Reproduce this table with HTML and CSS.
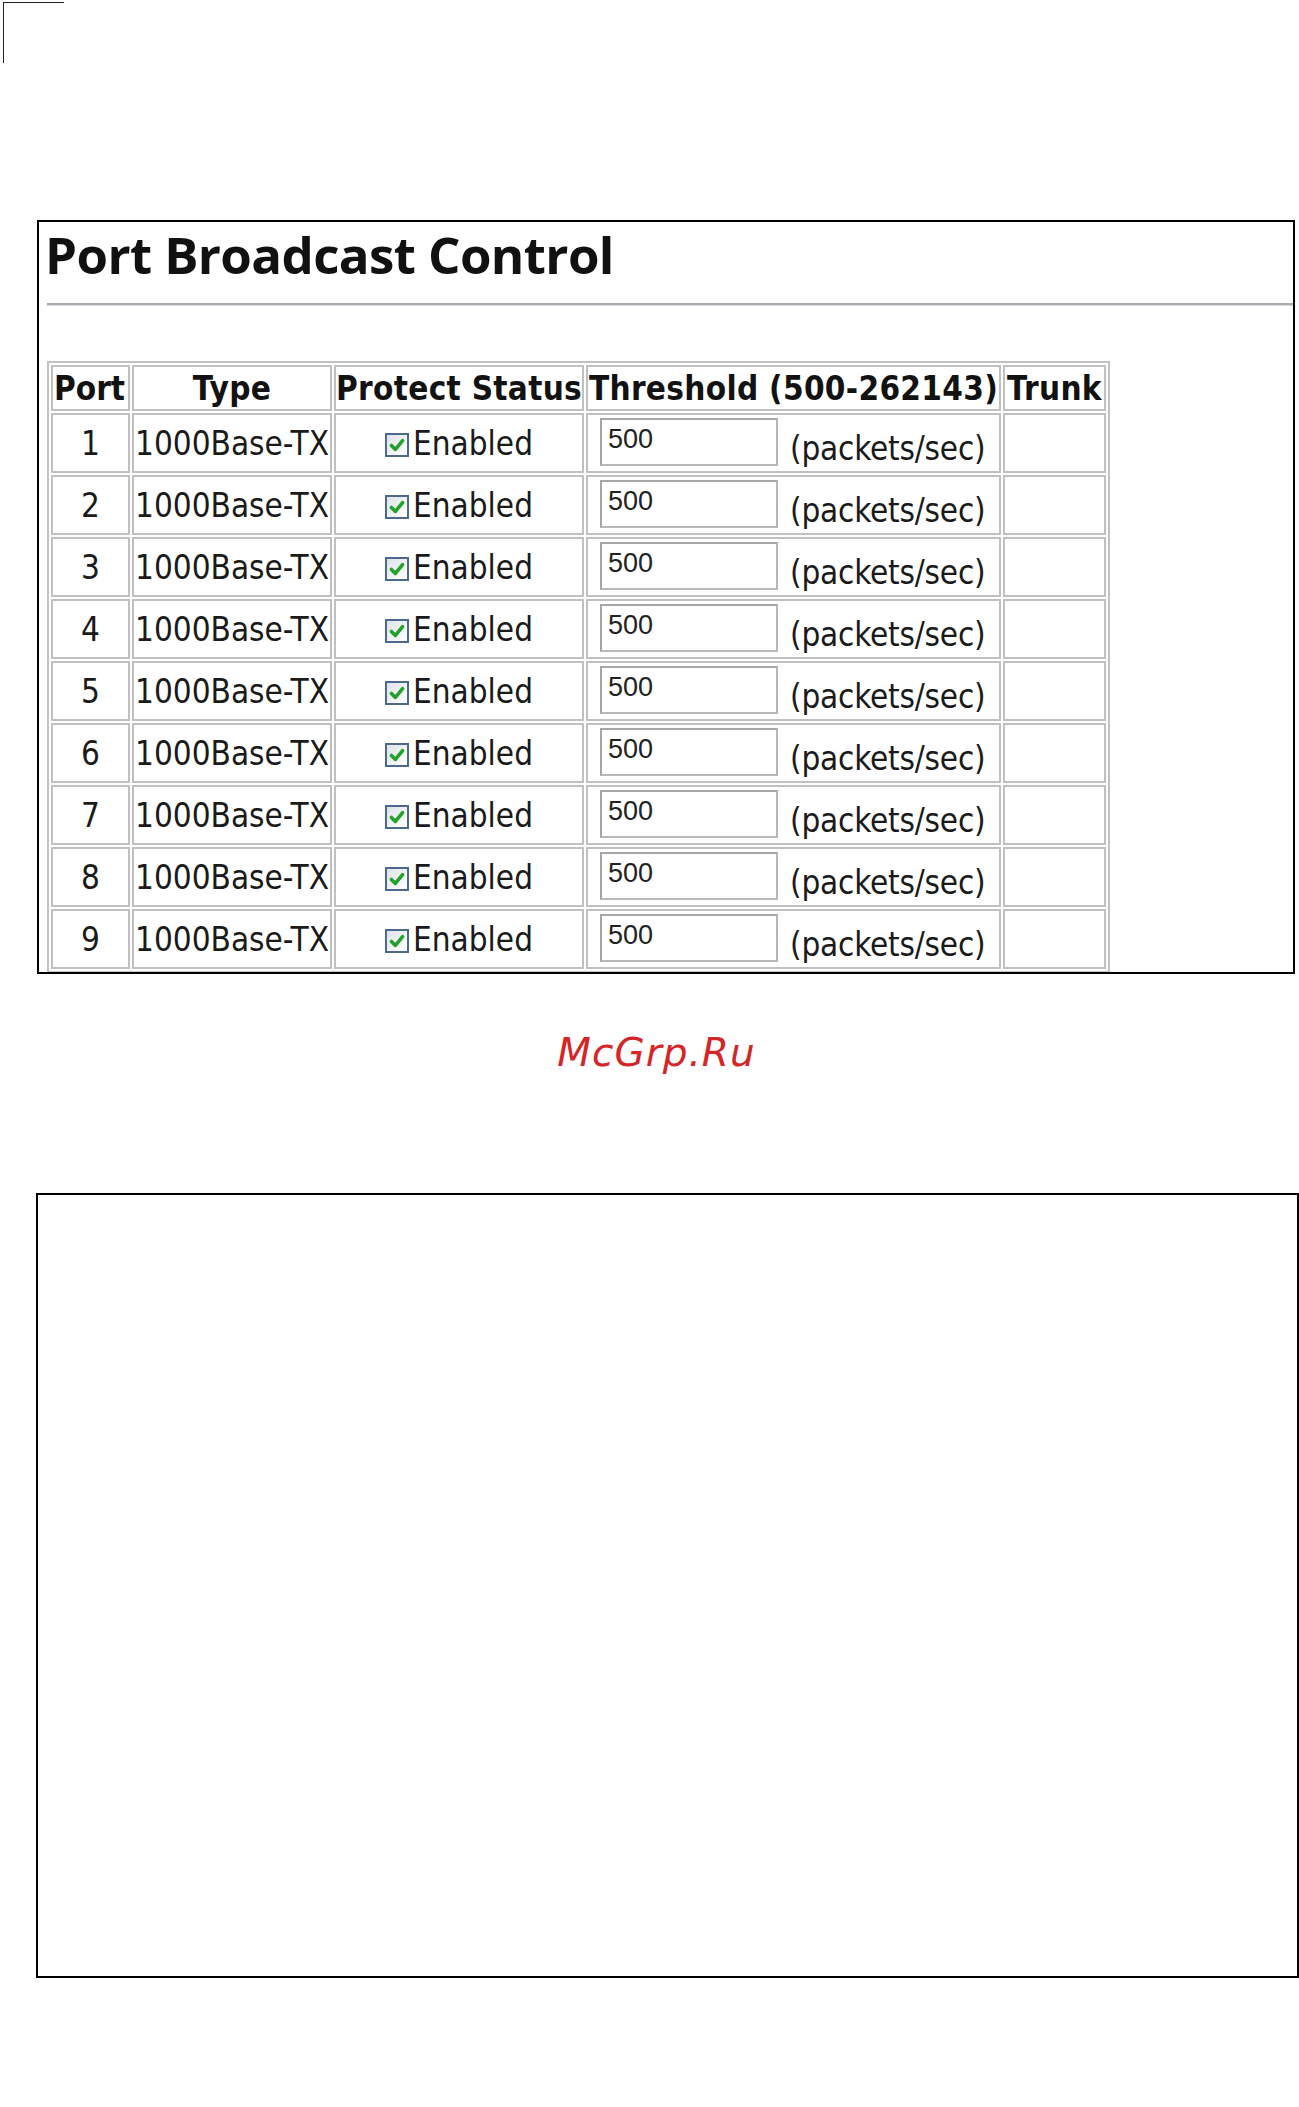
FILE: index.html
```html
<!DOCTYPE html>
<html>
<head>
<meta charset="utf-8">
<title>Port Broadcast Control</title>
<link rel="stylesheet" href="styles.css">
</head>
<body>
<div class="corner"></div>

<div class="panel">
  <h1 class="title">Port Broadcast Control</h1>
  <div class="rule"></div>
  <table class="ports">
    <colgroup>
      <col class="c-port"><col class="c-type"><col class="c-status"><col class="c-thr"><col class="c-trunk">
    </colgroup>
    <thead>
      <tr class="head">
        <th class="h-port">Port</th>
        <th>Type</th>
        <th>Protect Status</th>
        <th>Threshold (500-262143)</th>
        <th>Trunk</th>
      </tr>
    </thead>
    <tbody>
      <tr><td class="num">1</td><td class="type">1000Base-TX</td><td class="status"><span class="chk"><svg viewBox="0 0 10 10"><path d="M2.2 5.2 L4.2 7.2 L7.8 2.8" /></svg></span>Enabled</td><td class="thr"><input class="field" type="text" value="500" readonly><span class="unit">(packets/sec)</span></td><td></td></tr>
      <tr><td class="num">2</td><td class="type">1000Base-TX</td><td class="status"><span class="chk"><svg viewBox="0 0 10 10"><path d="M2.2 5.2 L4.2 7.2 L7.8 2.8" /></svg></span>Enabled</td><td class="thr"><input class="field" type="text" value="500" readonly><span class="unit">(packets/sec)</span></td><td></td></tr>
      <tr><td class="num">3</td><td class="type">1000Base-TX</td><td class="status"><span class="chk"><svg viewBox="0 0 10 10"><path d="M2.2 5.2 L4.2 7.2 L7.8 2.8" /></svg></span>Enabled</td><td class="thr"><input class="field" type="text" value="500" readonly><span class="unit">(packets/sec)</span></td><td></td></tr>
      <tr><td class="num">4</td><td class="type">1000Base-TX</td><td class="status"><span class="chk"><svg viewBox="0 0 10 10"><path d="M2.2 5.2 L4.2 7.2 L7.8 2.8" /></svg></span>Enabled</td><td class="thr"><input class="field" type="text" value="500" readonly><span class="unit">(packets/sec)</span></td><td></td></tr>
      <tr><td class="num">5</td><td class="type">1000Base-TX</td><td class="status"><span class="chk"><svg viewBox="0 0 10 10"><path d="M2.2 5.2 L4.2 7.2 L7.8 2.8" /></svg></span>Enabled</td><td class="thr"><input class="field" type="text" value="500" readonly><span class="unit">(packets/sec)</span></td><td></td></tr>
      <tr><td class="num">6</td><td class="type">1000Base-TX</td><td class="status"><span class="chk"><svg viewBox="0 0 10 10"><path d="M2.2 5.2 L4.2 7.2 L7.8 2.8" /></svg></span>Enabled</td><td class="thr"><input class="field" type="text" value="500" readonly><span class="unit">(packets/sec)</span></td><td></td></tr>
      <tr><td class="num">7</td><td class="type">1000Base-TX</td><td class="status"><span class="chk"><svg viewBox="0 0 10 10"><path d="M2.2 5.2 L4.2 7.2 L7.8 2.8" /></svg></span>Enabled</td><td class="thr"><input class="field" type="text" value="500" readonly><span class="unit">(packets/sec)</span></td><td></td></tr>
      <tr><td class="num">8</td><td class="type">1000Base-TX</td><td class="status"><span class="chk"><svg viewBox="0 0 10 10"><path d="M2.2 5.2 L4.2 7.2 L7.8 2.8" /></svg></span>Enabled</td><td class="thr"><input class="field" type="text" value="500" readonly><span class="unit">(packets/sec)</span></td><td></td></tr>
      <tr><td class="num">9</td><td class="type">1000Base-TX</td><td class="status"><span class="chk"><svg viewBox="0 0 10 10"><path d="M2.2 5.2 L4.2 7.2 L7.8 2.8" /></svg></span>Enabled</td><td class="thr"><input class="field" type="text" value="500" readonly><span class="unit">(packets/sec)</span></td><td></td></tr>
    </tbody>
  </table>
</div>

<div class="mark">McGrp.Ru</div>

<div class="panel-empty"></div>
</body>
</html>
```

FILE: styles.css
```css
html, body {
  margin: 0;
  padding: 0;
  background: #ffffff;
}

body {
  width: 1299px;
  min-height: 2107px;
  font-family: "DejaVu Sans Condensed", "DejaVu Sans", sans-serif;
  color: #1a1a1a;
}

.corner {
  width: 60px;
  height: 60px;
  margin: 2px 0 0 3px;
  border-top: 1px solid #222;
  border-left: 1px solid #222;
}

.panel {
  box-sizing: border-box;
  width: 1258px;
  height: 754px;
  margin: 157px 0 0 37px;
  border: 2px solid #000;
  overflow: hidden;
}

.title {
  margin: 0;
  padding-left: 6px;
  font-family: "Open Sans", sans-serif;
  font-weight: 700;
  font-size: 51px;
  line-height: 64px;
  color: #111;
  letter-spacing: -0.6px;
}

.rule {
  margin: 17px 0 0 8px;
  height: 2px;
  background: #a9abb0;
  border-bottom: 1px solid #d6d7da;
}

.ports {
  margin: 55px 0 0 8px;
  width: 1063px;
  table-layout: fixed;
  border-collapse: separate;
  border-spacing: 2px;
  border: 2px solid #c2c2c2;
  font-size: 33px;
}

.c-port { width: 79px; }
.c-type { width: 200px; }
.c-status { width: 250px; }
.c-thr { width: 415px; }
.c-trunk { width: 103px; }

.ports th,
.ports td {
  border: 2px solid #c0c0c0;
  padding: 0;
  vertical-align: middle;
  white-space: nowrap;
  overflow: hidden;
}

.head {
  height: 46px;
}

.ports th {
  font-weight: 700;
  font-size: 33px;
  letter-spacing: 0.3px;
  text-align: center;
  color: #121212;
}

.ports th.h-port {
  text-align: left;
  padding-left: 1px;
  letter-spacing: 0;
}

.ports tbody tr {
  height: 60px;
}

.num {
  text-align: center;
}

.type {
  text-align: left;
  padding-left: 1px !important;
}

.status {
  text-align: center;
}

.chk {
  display: inline-block;
  box-sizing: border-box;
  width: 24px;
  height: 24px;
  margin-right: 4px;
  vertical-align: -2px;
  border: 2px solid #4c6a8c;
  background: linear-gradient(135deg, #dfe3e8, #ffffff);
}

.chk svg {
  display: block;
  width: 20px;
  height: 20px;
}

.chk path {
  fill: none;
  stroke: #22a22c;
  stroke-width: 1.8;
  stroke-linecap: round;
  stroke-linejoin: round;
}

.thr {
  padding-left: 12px !important;
}

.field {
  box-sizing: border-box;
  width: 178px;
  height: 48px;
  margin: 0 12px 0 0;
  padding: 0 0 6px 6px;
  border: 2px solid #b8b8b8;
  border-top-color: #a6a6a6;
  border-left-color: #a6a6a6;
  background: #fff;
  font-family: "Liberation Sans Narrow", "Liberation Sans", sans-serif;
  font-size: 27px;
  color: #222;
  vertical-align: middle;
  outline: none;
}

.unit {
  vertical-align: -8px;
  letter-spacing: -0.2px;
}

.mark {
  margin: 56px 0 0 0;
  padding-left: 14px;
  text-align: center;
  font-family: "DejaVu Sans", sans-serif;
  font-style: oblique;
  font-size: 39px;
  line-height: 46px;
  letter-spacing: 1px;
  color: #d42628;
}

.panel-empty {
  box-sizing: border-box;
  width: 1263px;
  height: 785px;
  margin: 117px 0 0 36px;
  border: 2px solid #000;
}
```
